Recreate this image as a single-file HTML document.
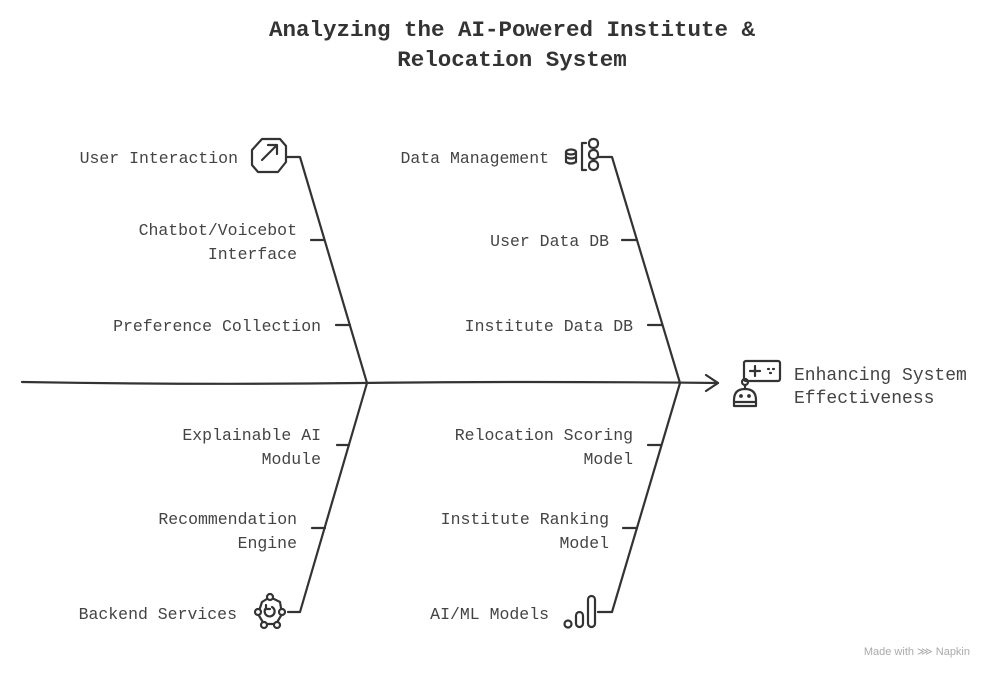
<!DOCTYPE html>
<html><head><meta charset="utf-8"><style>
html,body{margin:0;padding:0;background:#fff;width:996px;height:678px;overflow:hidden}
svg{display:block}
text{font-family:"Liberation Mono",monospace;fill:#444;font-size:16.5px}
.t{font-weight:bold;font-size:22.5px;fill:#333}
</style></head><body>
<svg width="996" height="678" viewBox="0 0 996 678">
<text class="t" x="512" y="36" text-anchor="middle">Analyzing the AI-Powered Institute &amp;</text>
<text class="t" x="512" y="66" text-anchor="middle">Relocation System</text>
<g stroke="#333" stroke-width="2.2" fill="none" stroke-linecap="round" stroke-linejoin="round">
<path d="M22 382 Q200 385 360 383 T718 383"/>
<path d="M706 375 L718 383 L706 391"/>
<path d="M286 157 H300 L367 383"/>
<path d="M288 612 H300 L367 383"/>
<path d="M598 157 H612 L680 383"/>
<path d="M598 612 H612 L680 383"/>
<path d="M311 240 H324"/><path d="M336 325 H350"/>
<path d="M622 240 H637"/><path d="M648 325 H662"/>
<path d="M337 445 H349"/><path d="M312 528 H325"/>
<path d="M648 445 H661"/><path d="M623 528 H637"/>
<!-- user interaction icon -->
<path d="M252 150 L262 139 H280 L286 146 V162 L278 172 H258 L252 165 Z"/>
<path d="M262 160 L276 146 M268 145 H277 V154"/>
<!-- data mgmt icon -->
<ellipse cx="571" cy="152" rx="5" ry="2.5"/><path d="M566 152 V162 Q571 165 576 162 V152 M566 157 Q571 160 576 157"/>
<path d="M586 143 H582 V170 H586"/>
<rect x="589" y="139" width="9" height="9" rx="4"/><rect x="589" y="150" width="9" height="9" rx="4"/><rect x="589" y="161" width="9" height="9" rx="4"/>
<!-- backend icon -->
<path d="M262 602 L270 597 L280 602 L282 614 L276 624 L264 624 L258 614 Z"/>
<circle cx="270" cy="597" r="3" fill="#fff"/><circle cx="258" cy="612" r="3" fill="#fff"/><circle cx="282" cy="612" r="3" fill="#fff"/><circle cx="264" cy="625" r="3" fill="#fff"/><circle cx="277" cy="625" r="3" fill="#fff"/>
<path d="M266 608 A5 5 0 1 0 272 607 M266 605 V609 H270"/>
<!-- AI/ML icon -->
<circle cx="568" cy="624" r="3.5"/><rect x="576" y="612" width="7" height="15" rx="3.5"/><rect x="588" y="596" width="7" height="31" rx="3.5"/>
<!-- robot icon -->
<rect x="744" y="361" width="36" height="20" rx="2"/>
<path d="M750 371 H760 M755 366 V376 M768 369 h1 M773 369 h1 M770 373 h1"/>
<circle cx="745" cy="382" r="3"/><path d="M745 385 V389"/>
<path d="M734 406 V400 Q734 389 745 389 Q756 389 756 400 V406 Z M734 402 H756"/>
<circle cx="741" cy="396" r="0.8" fill="#333"/><circle cx="749" cy="396" r="0.8" fill="#333"/>
</g>
<g text-anchor="end">
<text x="238" y="163">User Interaction</text>
<text x="297" y="235">Chatbot/Voicebot</text><text x="297" y="259">Interface</text>
<text x="321" y="331">Preference Collection</text>
<text x="549" y="163">Data Management</text>
<text x="609" y="246">User Data DB</text>
<text x="633" y="331">Institute Data DB</text>
<text x="321" y="440">Explainable AI</text><text x="321" y="464">Module</text>
<text x="297" y="524">Recommendation</text><text x="297" y="548">Engine</text>
<text x="237" y="619">Backend Services</text>
<text x="633" y="440">Relocation Scoring</text><text x="633" y="464">Model</text>
<text x="609" y="524">Institute Ranking</text><text x="609" y="548">Model</text>
<text x="549" y="619">AI/ML Models</text>
</g>
<text x="794" y="380" style="font-size:18px">Enhancing System</text>
<text x="794" y="403" style="font-size:18px">Effectiveness</text>
<text x="970" y="655" text-anchor="end" style="font-family:'Liberation Sans',sans-serif;font-size:11px;fill:#aaa">Made with ⋙ Napkin</text>
</svg>
</body></html>
